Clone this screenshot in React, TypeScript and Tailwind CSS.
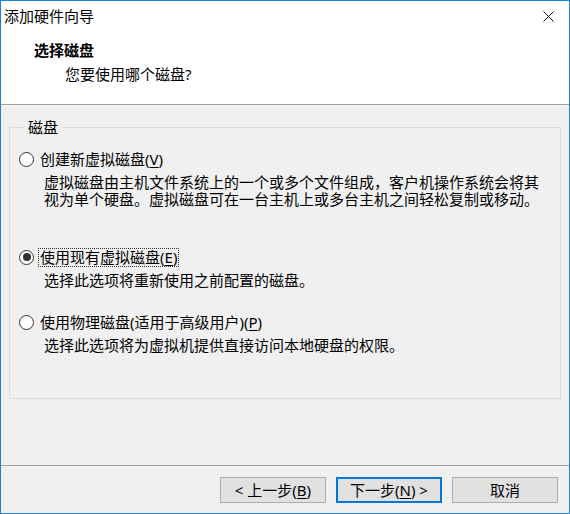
import React from "react";

const font = "font-['Noto_Sans','Noto_Sans_CJK_SC',sans-serif]";

function Radio({ checked }: { checked?: boolean })
{
    return (
        <span className="w-[15px] h-[15px] rounded-full border border-[#333333] bg-white flex items-center justify-center shrink-0">
            {checked && <span className="w-[8px] h-[8px] rounded-full bg-[#333333]" />}
        </span>
    );
}

interface OptionProps
{
    label: string;
    mnemonic: string;
    lines: string[];
    checked?: boolean;
    focused?: boolean;
    className?: string;
}

function Option({ label, mnemonic, lines, checked, focused, className = "" }: OptionProps)
{
    return (
        <div className={className}>
            <div className="flex items-center h-[20px] gap-[4px]">
                <Radio checked={checked} />
                <span className={"px-[1px] leading-[17px] border border-dotted " + (focused ? "border-[#333333]" : "border-transparent")}>
                    {label}(<span className="underline underline-offset-2">{mnemonic}</span>)
                </span>
            </div>
            <p className="mt-[5px] pl-[25px] leading-[17px] whitespace-nowrap">
                {lines.map((l, i) => (
                    <React.Fragment key={i}>
                        {i > 0 && <br />}
                        {l}
                    </React.Fragment>
                ))}
            </p>
        </div>
    );
}

function WizardButton({ children, primary }: { children: React.ReactNode; primary?: boolean })
{
    return (
        <button
            className={
                "w-[106px] h-[26px] bg-[#e1e1e1] text-[15px] leading-[20px] text-black flex items-center justify-center " +
                (primary ? "border-2 border-[#0078d7]" : "border border-[#adadad]")
            }
        >
            {children}
        </button>
    );
}

export default function App()
{
    return (
        <div className={"w-[570px] h-[514px] border border-[#1883d7] bg-white flex flex-col text-[15px] text-black " + font}>
            <div className="h-[30px] flex items-center justify-between pl-[3px] pr-[15px] bg-white">
                <span className="leading-[20px]">添加硬件向导</span>
                <svg width="11" height="11" viewBox="0 0 11 11" className="mt-[1px]">
                    <path d="M0.5 0.5 L10.5 10.5 M10.5 0.5 L0.5 10.5" stroke="#111" strokeWidth="1" fill="none" />
                </svg>
            </div>
            <div className="h-[74px] border-b border-[#a0a0a0] bg-white pt-[9px]">
                <div className="pl-[33px] font-bold leading-[20px]">选择磁盘</div>
                <div className="pl-[64px] mt-[4px] leading-[20px]">您要使用哪个磁盘?</div>
            </div>
            <div className="flex-1 bg-[#f0f0f0] pt-[14px]">
                <fieldset className="mx-[8px] h-[280px] border border-[#dcdcdc] pl-[9px] pr-[9px] pt-[13px]">
                    <legend className="ml-[5px] px-[4px] leading-[17px]">磁盘</legend>
                    <Option
                        label="创建新虚拟磁盘"
                        mnemonic="V"
                        lines={[
                            "虚拟磁盘由主机文件系统上的一个或多个文件组成，客户机操作系统会将其",
                            "视为单个硬盘。虚拟磁盘可在一台主机上或多台主机之间轻松复制或移动。",
                        ]}
                    />
                    <Option
                        className="mt-[39px]"
                        label="使用现有虚拟磁盘"
                        mnemonic="E"
                        checked
                        focused
                        lines={["选择此选项将重新使用之前配置的磁盘。"]}
                    />
                    <Option
                        className="mt-[23px]"
                        label="使用物理磁盘(适用于高级用户)"
                        mnemonic="P"
                        lines={["选择此选项将为虚拟机提供直接访问本地硬盘的权限。"]}
                    />
                </fieldset>
            </div>
            <div className="h-[48px] border-t border-[#a0a0a0] bg-[#f0f0f0] flex justify-end items-start gap-[10px] pr-[11px] pt-[11px]">
                <WizardButton>
                    &lt; 上一步(<span className="underline underline-offset-2">B</span>)
                </WizardButton>
                <WizardButton primary>
                    下一步(<span className="underline underline-offset-2">N</span>) &gt;
                </WizardButton>
                <WizardButton>取消</WizardButton>
            </div>
        </div>
    );
}
